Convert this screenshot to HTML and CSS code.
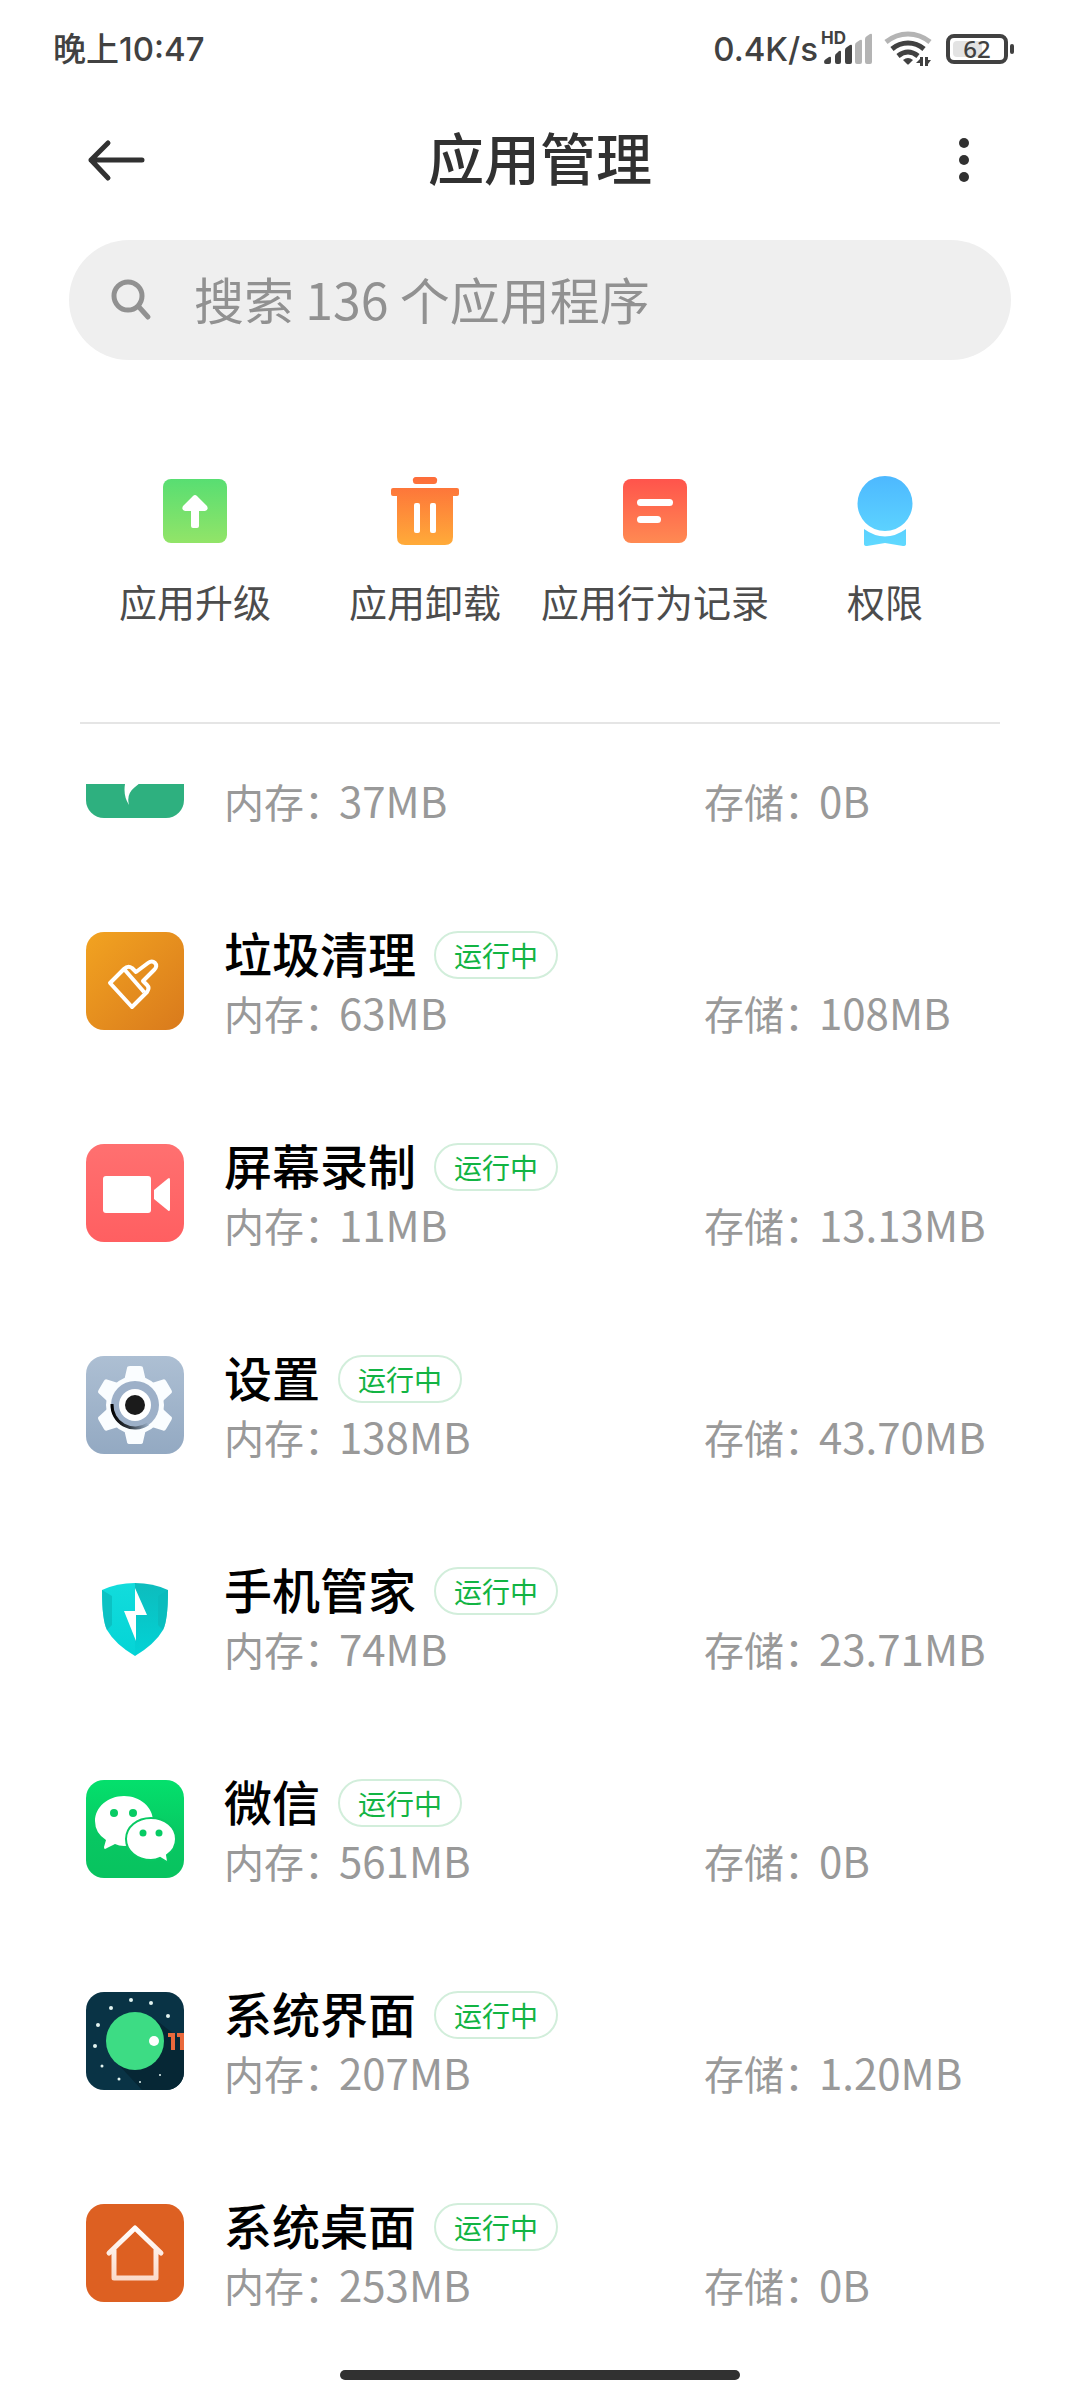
FILE: index.html
```html
<!DOCTYPE html>
<html lang="zh-CN">
<head>
<meta charset="utf-8">
<meta name="viewport" content="width=device-width, initial-scale=1">
<title>应用管理</title>
<link rel="stylesheet" href="styles.css">
</head>
<body>
<div class="status">
  <span class="status-time">晚上10:47</span>
  <div class="status-right">
    <span class="status-speed">0.4K/s</span>
    <svg class="signal" width="54" height="36" viewBox="820 32 54 36" role="img" aria-label="HD 信号">
      <text class="hd" x="821" y="45">HD</text>
      <g fill="#414141">
        <path d="M824 63q0-2 2-3l3-2q2-1 2 1v4q0 2-2 2h-3q-2 0-2-2z"/>
        <path d="M835 57q0-2 2-3l2-2q2-1 2 1v10q0 2-2 2h-2q-2 0-2-2z"/>
        <path d="M845 51q0-2 2-3l3-2q2-1 2 1v16q0 2-2 2h-3q-2 0-2-2z"/>
      </g>
      <g fill="#b4b4b4">
        <path d="M855 46q0-2 2-3l3-2q2-1 2 1v21q0 2-2 2h-3q-2 0-2-2z"/>
        <path d="M865 40q0-2 2-3l3-2q2-1 2 1v27q0 2-2 2h-3q-2 0-2-2z"/>
      </g>
    </svg>
    <svg class="wifi" width="48" height="36" viewBox="884 32 48 36" role="img" aria-label="Wi-Fi">
      <g fill="none" stroke-width="5">
        <path d="M886 43Q896 35 908 35T930 43" stroke="#b4b4b4"/>
        <path d="M892 50Q899 44 908 44T924 50" stroke="#414141"/>
        <path d="M898 57Q903 53 908 53T918 57" stroke="#414141"/>
      </g>
      <path d="M903 61Q908 57 913 61L909 65Q908 66 907 65z" fill="#414141"/>
      <path d="M923 58v9h-3v-3h-4l4-4v-2zM925 67V58h3v3h3l-3 4v2z" fill="#414141"/>
    </svg>
    <svg class="battery" width="68" height="30" viewBox="946 34 68 30" role="img" aria-label="电量 62%">
      <rect x="948" y="36" width="58" height="26" rx="6" fill="#fff" stroke="#414141" stroke-width="4"/>
      <path d="M957 41h25v16h-25q-4 0-4-4v-8q0-4 4-4z" fill="#e3e3e3"/>
      <rect x="1010" y="44" width="4" height="10" rx="2" fill="#414141"/>
      <text class="battery-num" x="977" y="58" text-anchor="middle">62</text>
    </svg>
  </div>
</div>

<header class="bar">
  <button class="icon-btn" type="button" aria-label="返回">
    <svg width="60" height="44" viewBox="86 138 60 44" fill="none" stroke="#313131" stroke-width="5" stroke-linecap="round" stroke-linejoin="round"><path d="M142 160H91M108 143L91 160L108 178"/></svg>
  </button>
  <h1 class="title">应用管理</h1>
  <button class="icon-btn icon-btn-end" type="button" aria-label="更多">
    <svg width="12" height="46" viewBox="958 137 12 46" fill="#313131"><circle cx="964" cy="143" r="5"/><circle cx="964" cy="160" r="5"/><circle cx="964" cy="177" r="5"/></svg>
  </button>
</header>

<label class="search">
  <svg width="40" height="42" viewBox="111 279 40 42" fill="none" stroke="#919191" stroke-width="5" stroke-linecap="round" aria-hidden="true"><circle cx="128" cy="296" r="14"/><path d="M139 307L148 317"/></svg>
  <input class="search-input" type="search" placeholder="搜索 136 个应用程序" aria-label="搜索应用">
</label>

<nav class="actions">
  <a class="action" href="#upgrade">
    <svg width="72" height="72" viewBox="0 0 72 72" aria-hidden="true">
      <defs><linearGradient id="g-up" x1="0" y1="0" x2="0" y2="1"><stop offset="0" stop-color="#58de72"/><stop offset="1" stop-color="#92e468"/></linearGradient></defs>
      <rect x="4" y="4" width="64" height="64" rx="8" fill="url(#g-up)"/>
      <path d="M34 21q2-2 4 0l10 10q2 4-2 5h-6v15q0 2-2 2h-4q-2 0-2-2V36h-6q-4-1-2-5z" fill="#fff"/>
    </svg>
    <span>应用升级</span>
  </a>
  <a class="action" href="#uninstall">
    <svg width="72" height="72" viewBox="0 0 72 72" aria-hidden="true">
      <defs><linearGradient id="g-bin" gradientUnits="userSpaceOnUse" x1="0" y1="2" x2="0" y2="70"><stop offset="0" stop-color="#fd6c3a"/><stop offset="1" stop-color="#ffab39"/></linearGradient></defs>
      <path fill="url(#g-bin)" d="M27 2h18a3 3 0 0 1 3 4a3 3 0 0 1-3 3H27a3 3 0 0 1-3-3a3 3 0 0 1 3-4zM4 13h64q2 0 2 2v4q0 2-2 2h-4v41q0 8-8 8H16q-8 0-8-8V21H4q-2 0-2-2v-4q0-2 2-2z"/>
      <rect x="25" y="28" width="6" height="30" rx="2" fill="#fff"/><rect x="41" y="28" width="6" height="30" rx="2" fill="#fff"/>
    </svg>
    <span>应用卸载</span>
  </a>
  <a class="action" href="#records">
    <svg width="72" height="72" viewBox="0 0 72 72" aria-hidden="true">
      <defs><linearGradient id="g-rec" x1="0" y1="0" x2="0" y2="1"><stop offset="0" stop-color="#ff544c"/><stop offset="1" stop-color="#ff8a52"/></linearGradient></defs>
      <rect x="4" y="4" width="64" height="64" rx="8" fill="url(#g-rec)"/>
      <rect x="18" y="24" width="36" height="7" rx="3.500" fill="#fff"/><rect x="18" y="41" width="24" height="7" rx="3.500" fill="#fff"/>
    </svg>
    <span>应用行为记录</span>
  </a>
  <a class="action" href="#permissions">
    <svg width="72" height="72" viewBox="0 0 72 72" aria-hidden="true">
      <defs><linearGradient id="g-per" gradientUnits="userSpaceOnUse" x1="0" y1="0" x2="0" y2="71"><stop offset="0" stop-color="#4db8ff"/><stop offset="1" stop-color="#60d9ff"/></linearGradient></defs>
      <path fill="url(#g-per)" d="M36 1a27 27 0 0 1 0 55a27 27 0 0 1 0-55zM15 54Q36 69 57 54v15q0 2-3 2L36 68L18 71q-3 0-3-2z"/>
    </svg>
    <span>权限</span>
  </a>
</nav>

<main class="list-view">
<ul class="list">
  <li class="app">
    <svg class="app-icon" viewBox="0 0 98 98" aria-hidden="true"><rect width="98" height="98" rx="18" fill="#2eb07f"/><path d="M28 24h42v26L49 67Q40 74 43 85Q37 76 39 64L28 50z" fill="#fff"/></svg>
    <div class="app-body">
      <div class="app-head"></div>
      <div class="app-info"><span class="stat"><span class="stat-key">内存：</span><span class="stat-value">37MB</span></span><span class="stat"><span class="stat-key">存储：</span><span class="stat-value">0B</span></span></div>
    </div>
  </li>
  <li class="app">
    <svg class="app-icon" viewBox="0 0 98 98" aria-hidden="true">
      <defs><linearGradient id="g-clean" x1="0" y1="0" x2="1" y2="1"><stop offset="0" stop-color="#f2a321"/><stop offset="1" stop-color="#d97a1c"/></linearGradient></defs>
      <rect width="98" height="98" rx="18" fill="url(#g-clean)"/>
      <path d="M24 51L38 37Q42 33 46 36L50 40L62 31Q66 28 69 31T68 38L57 49L61 53Q64 56 61 60L46 75ZM38 37L58 60" fill="none" stroke="#fff" stroke-width="4" stroke-linejoin="round"/>
    </svg>
    <div class="app-body">
      <div class="app-head"><h2 class="app-name">垃圾清理</h2><span class="tag">运行中</span></div>
      <div class="app-info"><span class="stat"><span class="stat-key">内存：</span><span class="stat-value">63MB</span></span><span class="stat"><span class="stat-key">存储：</span><span class="stat-value">108MB</span></span></div>
    </div>
  </li>
  <li class="app">
    <svg class="app-icon" viewBox="0 0 98 98" aria-hidden="true">
      <defs><linearGradient id="g-cam" x1="0" y1="0" x2="0" y2="1"><stop offset="0" stop-color="#ff7070"/><stop offset="1" stop-color="#ff5f61"/></linearGradient></defs>
      <rect width="98" height="98" rx="18" fill="url(#g-cam)"/>
      <rect x="17" y="32" width="48" height="37" rx="3" fill="#fff"/><path d="M68 46L82 34.500Q84 33 84 36V65Q84 68 82 66.500L68 55z" fill="#fff"/>
    </svg>
    <div class="app-body">
      <div class="app-head"><h2 class="app-name">屏幕录制</h2><span class="tag">运行中</span></div>
      <div class="app-info"><span class="stat"><span class="stat-key">内存：</span><span class="stat-value">11MB</span></span><span class="stat"><span class="stat-key">存储：</span><span class="stat-value">13.13MB</span></span></div>
    </div>
  </li>
  <li class="app">
    <svg class="app-icon" viewBox="0 0 98 98" aria-hidden="true">
      <defs>
        <linearGradient id="g-set" x1="0" y1="0" x2="0" y2="1"><stop offset="0" stop-color="#adbfd3"/><stop offset="1" stop-color="#93a9c2"/></linearGradient>
        <linearGradient id="g-arc" x1="0" y1="0" x2="1" y2="0"><stop offset="0" stop-color="#000"/><stop offset=".5" stop-color="#333b44"/><stop offset="1" stop-color="#98adc5"/></linearGradient>
        <path id="tooth" d="M38 25L41 12Q41 10 44 10H54Q57 10 57 12L60 25z"/>
      </defs>
      <rect width="98" height="98" rx="18" fill="url(#g-set)"/>
      <g fill="#fafdff"><circle cx="49" cy="49" r="29"/>
        <use href="#tooth"/><use href="#tooth" transform="rotate(60 49 49)"/><use href="#tooth" transform="rotate(120 49 49)"/><use href="#tooth" transform="rotate(180 49 49)"/><use href="#tooth" transform="rotate(240 49 49)"/><use href="#tooth" transform="rotate(300 49 49)"/>
      </g>
      <circle cx="49" cy="49" r="24" fill="#9db0c8"/>
      <path d="M26 48A23 23 0 0 0 62 68" fill="none" stroke="url(#g-arc)" stroke-width="3"/>
      <circle cx="49" cy="49" r="16" fill="#fff"/><circle cx="49" cy="49" r="10" fill="#1b1b1b"/>
    </svg>
    <div class="app-body">
      <div class="app-head"><h2 class="app-name">设置</h2><span class="tag">运行中</span></div>
      <div class="app-info"><span class="stat"><span class="stat-key">内存：</span><span class="stat-value">138MB</span></span><span class="stat"><span class="stat-key">存储：</span><span class="stat-value">43.70MB</span></span></div>
    </div>
  </li>
  <li class="app">
    <svg class="app-icon" viewBox="0 0 98 98" aria-hidden="true">
      <defs>
        <linearGradient id="g-sl" x1="0" y1="0" x2="0" y2="1"><stop offset="0" stop-color="#12dcdc"/><stop offset="1" stop-color="#04d4d6"/></linearGradient>
        <linearGradient id="g-sr" x1="0" y1="0" x2="0" y2="1"><stop offset="0" stop-color="#0dbcbd"/><stop offset="1" stop-color="#02d3d6"/></linearGradient>
      </defs>
      <path d="M49 15Q31 15 16 22Q16 52 21 62Q29 76 49 88z" fill="url(#g-sl)"/>
      <path d="M49 15Q67 15 82 22Q82 52 77 62Q69 76 49 88z" fill="url(#g-sr)"/>
      <path d="M16 22L26 28V57L21 62Q16 52 16 22zM82 22L72 28V57L77 62Q82 52 82 22z" fill="#0bb9bb" opacity=".75"/>
      <path d="M49 20L61 47H50V73L38 43H49z" fill="#fff"/>
    </svg>
    <div class="app-body">
      <div class="app-head"><h2 class="app-name">手机管家</h2><span class="tag">运行中</span></div>
      <div class="app-info"><span class="stat"><span class="stat-key">内存：</span><span class="stat-value">74MB</span></span><span class="stat"><span class="stat-key">存储：</span><span class="stat-value">23.71MB</span></span></div>
    </div>
  </li>
  <li class="app">
    <svg class="app-icon" viewBox="0 0 98 98" aria-hidden="true">
      <defs><linearGradient id="g-wx" x1="0" y1="0" x2="0" y2="1"><stop offset="0" stop-color="#04e06c"/><stop offset=".6" stop-color="#08c762"/><stop offset="1" stop-color="#08c35f"/></linearGradient></defs>
      <rect width="98" height="98" rx="18" fill="url(#g-wx)"/>
      <path d="M38 16C54 16 67 27 67 41S54 66 38 66Q33 66 29 64L19 69Q18 69 18 67L20 60Q9 53 9 41C9 27 22 16 38 16z" fill="#fff"/>
      <path d="M65 38C79 38 90 47 90 59Q90 69 81 75L82 81Q82 82 81 82L74 78Q70 80 65 80C51 80 40 71 40 59S51 38 65 38z" fill="#fff" stroke="#08c963" stroke-width="2"/>
      <g fill="#07cb64"><circle cx="28" cy="33" r="4"/><circle cx="47" cy="33" r="4"/><circle cx="57" cy="53" r="3.500"/><circle cx="73" cy="53" r="3.500"/></g>
    </svg>
    <div class="app-body">
      <div class="app-head"><h2 class="app-name">微信</h2><span class="tag">运行中</span></div>
      <div class="app-info"><span class="stat"><span class="stat-key">内存：</span><span class="stat-value">561MB</span></span><span class="stat"><span class="stat-key">存储：</span><span class="stat-value">0B</span></span></div>
    </div>
  </li>
  <li class="app">
    <svg class="app-icon" viewBox="0 0 98 98" aria-hidden="true">
      <defs><clipPath id="c-and"><rect width="98" height="98" rx="18"/></clipPath></defs>
      <g clip-path="url(#c-and)">
        <rect width="98" height="98" fill="#093345"/>
        <path d="M30 70L56 98H98V50L70 28z" fill="#062735"/>
        <circle cx="49" cy="49" r="29" fill="#3ddc84"/><circle cx="68" cy="49" r="5" fill="#fff"/>
        <path d="M82 41h7v17h-4V45h-3zM91 41h7v17h-4V45h-3z" fill="#e9693c"/>
        <g fill="#e2f4f0"><circle cx="45" cy="8" r="2"/><circle cx="65" cy="11" r="2"/><circle cx="25" cy="16" r="2"/><circle cx="82" cy="24" r="2"/><circle cx="12" cy="33" r="2"/><circle cx="9" cy="54" r="2"/><circle cx="16" cy="74" r="1.500"/><circle cx="33" cy="87" r="1.500"/><circle cx="54" cy="90" r="1"/><circle cx="74" cy="83" r="1"/></g>
      </g>
    </svg>
    <div class="app-body">
      <div class="app-head"><h2 class="app-name">系统界面</h2><span class="tag">运行中</span></div>
      <div class="app-info"><span class="stat"><span class="stat-key">内存：</span><span class="stat-value">207MB</span></span><span class="stat"><span class="stat-key">存储：</span><span class="stat-value">1.20MB</span></span></div>
    </div>
  </li>
  <li class="app">
    <svg class="app-icon" viewBox="0 0 98 98" aria-hidden="true">
      <defs><linearGradient id="g-home" gradientUnits="userSpaceOnUse" x1="0" y1="22" x2="0" y2="76"><stop offset="0" stop-color="#fff"/><stop offset="1" stop-color="#fbd9c9"/></linearGradient></defs>
      <rect width="98" height="98" rx="18" fill="#dd6022"/>
      <path d="M23 49L49 24L75 49M28 46V74H70V46" fill="none" stroke="url(#g-home)" stroke-width="5" stroke-linecap="round" stroke-linejoin="round"/>
    </svg>
    <div class="app-body">
      <div class="app-head"><h2 class="app-name">系统桌面</h2><span class="tag">运行中</span></div>
      <div class="app-info"><span class="stat"><span class="stat-key">内存：</span><span class="stat-value">253MB</span></span><span class="stat"><span class="stat-key">存储：</span><span class="stat-value">0B</span></span></div>
    </div>
  </li>
</ul>
</main>
<div class="home-bar"></div>
</body>
</html>
```
FILE: styles.css
```css
* { box-sizing: border-box; }

body {
  margin: 0;
  min-height: 100vh;
  display: flex;
  flex-direction: column;
  background: #fff;
  color: #000;
  font-family: "Noto Sans CJK SC", "Noto Sans", sans-serif;
}

svg { display: block; flex: none; overflow: visible; }
h1, h2, ul { margin: 0; padding: 0; }

/* Status bar */
.status {
  display: flex;
  justify-content: space-between;
  align-items: center;
  height: 98px;
  padding: 0 66px 0 53px;
  color: #414141;
  font: 500 33px/44px Inter, "Noto Sans CJK SC", sans-serif;
}
.status-right { display: flex; align-items: center; }
.signal { margin: 0 10px 0 2px; }
.wifi { margin-right: 14px; }
.hd { font: 700 17px Inter, sans-serif; fill: #414141; }
.battery-num { font: 500 24px "Noto Sans", sans-serif; fill: #414141; }

/* Title bar */
.bar {
  display: grid;
  grid-template-columns: 100px 1fr 100px;
  align-items: center;
  height: 124px;
  padding: 0 86px;
  color: #313131;
}
.icon-btn {
  display: flex;
  align-items: center;
  height: 100px;
  padding: 0;
  border: 0;
  background: none;
}
.icon-btn-end { justify-content: flex-end; padding-right: 24px; }
.title {
  padding-bottom: 8px;
  font-size: 56px;
  line-height: 84px;
  font-weight: 500;
  text-align: center;
}

/* Search */
.search {
  display: flex;
  align-items: center;
  gap: 43px;
  height: 120px;
  margin: 18px 69px 0;
  padding: 0 42px;
  border-radius: 60px;
  background: #efefef;
}
.search-input {
  flex: 1;
  min-width: 0;
  padding: 0 0 4px;
  border: 0;
  outline: 0;
  background: none;
  color: #313131;
  font: 400 50px/80px "Noto Sans CJK SC", sans-serif;
}
.search-input::placeholder { color: #919191; opacity: 1; }

/* Shortcuts */
.actions {
  display: grid;
  grid-template-columns: repeat(4, 1fr);
  margin: 0 80px;
  padding: 115px 0 93px;
  border-bottom: 2px solid #e5e5e5;
}
.action {
  display: flex;
  flex-direction: column;
  align-items: center;
  gap: 26px;
  color: #4c4c4c;
  font-size: 38px;
  line-height: 56px;
  text-decoration: none;
  white-space: nowrap;
}

/* Scrolled app list */
.list-view { margin-top: 60px; overflow: hidden; }
.list { margin-top: -121px; list-style: none; }
.app {
  display: flex;
  align-items: center;
  gap: 40px;
  height: 212px;
  padding: 0 60px 0 86px;
}
.app-icon { width: 98px; height: 98px; }
.app-body { flex: 1; padding-top: 3px; }
.app-head { display: flex; align-items: center; gap: 18px; height: 60px; }
.app-name { font-size: 48px; line-height: 60px; font-weight: 500; }
.tag {
  margin-top: 5px;
  padding: 0 18px;
  border: 2px solid #d2eedb;
  border-radius: 24px;
  color: #12b443;
  font-size: 28px;
  line-height: 44px;
}
.app-info {
  display: grid;
  grid-template-columns: 480px 1fr;
  color: #999;
  font-size: 40px;
  line-height: 60px;
}
.stat { display: flex; align-items: baseline; white-space: nowrap; }
.stat-key { width: 115px; }
.stat-value { font-size: 42px; }

.home-bar {
  width: 37%;
  height: 10px;
  margin: auto auto 20px;
  border-radius: 5px;
  background: #313131;
}
```
